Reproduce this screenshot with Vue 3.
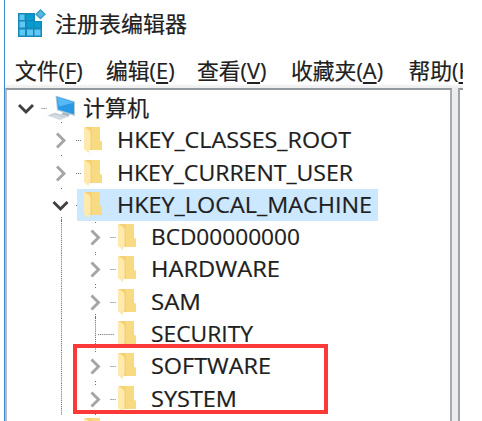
<script setup>
const menus = [
  { text: '文件', key: 'F', width: 91 },
  { text: '编辑', key: 'E', width: 91 },
  { text: '查看', key: 'V', width: 94 },
  { text: '收藏夹', key: 'A', width: 117.5 },
  { text: '帮助', key: 'H', width: 80 },
]

const rows = [
  { label: '计算机', level: 0, state: 'open', width: 66 },
  { label: 'HKEY_CLASSES_ROOT', level: 1, state: 'closed', width: 234 },
  { label: 'HKEY_CURRENT_USER', level: 1, state: 'closed', width: 236 },
  { label: 'HKEY_LOCAL_MACHINE', level: 1, state: 'open', selected: true, width: 255 },
  { label: 'BCD00000000', level: 2, state: 'closed', width: 149 },
  { label: 'HARDWARE', level: 2, state: 'closed', width: 129 },
  { label: 'SAM', level: 2, state: 'closed', width: 50 },
  { label: 'SECURITY', level: 2, state: 'leaf', width: 102 },
  { label: 'SOFTWARE', level: 2, state: 'closed', width: 120 },
  { label: 'SYSTEM', level: 2, state: 'closed', width: 86 },
  { label: '', level: 1, state: 'leaf', width: 0 },
]
const gutter = [40, 77, 111]
const center = [19, 53.5, 88]
</script>

<template>
  <div class="window">
    <header class="title">
      <svg class="app-icon" width="30" height="30" viewBox="0 0 30 30">
        <path d="M1 4H18V12H25V28H1Z" fill="#1787b8" />
        <path d="M2.500 5.500h5v5.500h-5zM2.500 12.500h5.500v6h-5.500zM2.500 20.500h5.500v6h-5.500zM10 20.500h6v6h-6zM17.500 20.500h6v6h-6z" fill="#5cc9f5" />
        <path d="M9.500 5.500h6.500v5.500h-6.500zM10 12.500h6v6h-6zM17.500 13h6v5.500h-6z" fill="#049ed2" />
        <path d="M23.500 0L29 5.200L23.500 10.500L18 5.200Z" fill="#3b9fca" />
        <path d="M23.500 2L27 5.200L23.500 8.500L20 5.200Z" fill="#59b8dd" />
      </svg>
      <svg class="title-text" width="140" height="36">
        <text x="0" y="23" textLength="132" lengthAdjust="spacingAndGlyphs">注册表编辑器</text>
      </svg>
    </header>
    <nav class="menu">
      <span v-for="m in menus" :key="m.key" class="menu-item" :style="{ width: m.width + 'px' }">{{ m.text }}(<u>{{ m.key }}</u>)</span>
    </nav>
    <main class="panes">
      <section class="tree">
        <div v-for="(r, i) in rows" :key="i" class="row">
          <svg class="gutter" :width="gutter[r.level]" height="32.3">
            <path v-if="r.level === 2" class="dots" d="M54.500 0V32.300" />
            <template v-if="r.level > 0 && r.label">
              <path v-if="r.state !== 'leaf'" class="dots" :d="`M${center[r.level] + (r.level === 1 ? 1 : 0.5)} 31V33`" />
              <path v-else class="dots" d="M88.500 0V32M91 16.500H107" />
            </template>
            <path v-if="r.level === 2 && r.state === 'closed'" class="dots" d="M88.500 1V2" />
            <path v-if="i === 3" class="dots" d="M54.500 28V33" />
            <path v-if="i === 6" class="dots" d="M88.500 28V33" />
            <path v-if="r.state !== 'leaf'" class="dots" :d="`M${center[r.level] + 15.5} 16.500h5`" />
            <path v-if="r.state === 'open'" class="chevron open" :d="`M${center[r.level] - 7} 13l7 7l7 -7`" />
            <path v-if="r.state === 'closed'" class="chevron" :d="`M${center[r.level] - 3.5} 9.500l7 7l-7 7`" />
          </svg>
          <div class="item" :class="{ selected: r.selected, root: !r.level }">
            <svg v-if="r.level === 0" class="computer" width="30" height="32" viewBox="0 0 30 32">
              <path d="M8.500 3.500L28 9.500V24L10 18.500Z" fill="#b9ccd9" />
              <path d="M9.500 4.500L27 10V22.500L11 17.500Z" fill="#2999e6" />
              <path d="M10 5L27 10.500L12 14.500Z" fill="#56b9f6" />
              <path d="M16 20L23 22L21 25L14 23Z" fill="#a8b8c5" />
              <path d="M0 23.500L8 20.500L22 24.500L13 28Z" fill="#d5dce1" />
              <path d="M3 23.500L8 22L18 25" fill="none" stroke="#bdc9d2" />
              <path class="dots" d="M14.500 30V32" />
            </svg>
            <svg v-else class="folder" width="19" height="27" viewBox="0 0 19 27">
              <path d="M1 0H16V14L18 15V23H4Z" fill="#f4d274" />
              <path d="M8 0H16V14L18 15V23H8Z" fill="#f8da82" />
              <path d="M0 0L5 3Q6.500 4 6.500 6V21L4.500 26L0 22Z" fill="#ffe9ad" />
            </svg>
            <svg v-if="r.label" class="label" :width="r.width + 6" height="32.300">
              <text x="0" y="24" :textLength="r.width" lengthAdjust="spacingAndGlyphs">{{ r.label }}</text>
            </svg>
          </div>
        </div>
      </section>
      <section class="values"></section>
    </main>
    <div class="highlight"></div>
  </div>
</template>

<style>
body { background: #fff; overflow: hidden; }
</style>

<style scoped>
.window {
  position: relative;
  box-sizing: border-box;
  width: 463px;
  height: 421px;
  padding-left: 5px;
  overflow: hidden;
  background: linear-gradient(90deg, #fff 3.500px, #378bd2 3.500px, #378bd2 5.300px, #fff 5.300px);
  color: #202020;
  font-family: "Open Sans", "Noto Sans CJK SC", sans-serif;
  font-size: 21px;
}
svg { display: block; flex: none; }
text { fill: #202020; stroke: #202020; stroke-width: 0.200px; font-size: 21.700px; }
.title { display: flex; height: 55px; padding: 9px 0 0 12px; box-sizing: border-box; }
.app-icon { margin-right: 7.500px; }
.title-text text { font-family: "Noto Sans CJK SC", sans-serif; font-size: 22px; }
.menu {
  display: flex;
  height: 32.500px;
  padding-left: 10px;
  box-sizing: border-box;
  line-height: 32px;
  white-space: nowrap;
  background: linear-gradient(#fff 29px, #f0f0f0 31px);
}
.menu-item { flex: none; font-size: 21.800px; -webkit-text-stroke: 0.200px #202020; }
.menu-item u { text-decoration-thickness: 1.500px; text-underline-offset: 3px; }
.panes { display: flex; height: 334px; background: #ededed; }
.tree {
  box-sizing: border-box;
  flex: none;
  width: 447px;
  padding-top: 2.500px;
  overflow: hidden;
  border: 2px solid #93989f;
  border-bottom: 0;
  border-left-color: #b8bbc0;
  border-right-color: #a7acb3;
  background: #fff;
}
.values {
  flex: 1;
  margin-left: 6px;
  border-left: 2px solid #a0a5ac;
  border-top: 2px solid #93989f;
  background: #fff;
}
.row { display: flex; height: 32.300px; }
.dots { fill: none; stroke: #707070; stroke-width: 1; stroke-dasharray: 1.100 1; }
.chevron { fill: none; stroke: #a5a5a5; stroke-width: 2.900; }
.chevron.open { stroke: #404040; }
.item { display: flex; height: 32.300px; }
.item.selected { background: #cce8ff; margin-left: -7px; padding-left: 7px; }
.folder { margin-top: 3px; margin-right: 13.500px; }
.computer { margin-right: 5.500px; }
.highlight {
  position: absolute;
  left: 72.500px;
  top: 344px;
  width: 247px;
  height: 62px;
  border: 4px solid #fc3939;
}
</style>
